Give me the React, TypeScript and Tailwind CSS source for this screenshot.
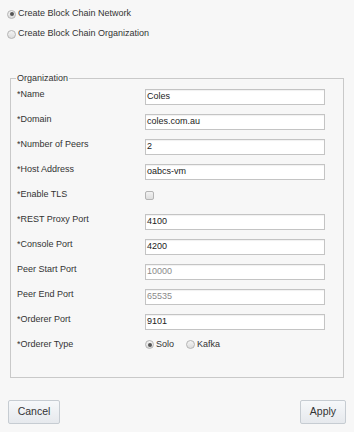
import React from "react";

type Row = {
  label: string;
  value?: string;
  disabled?: boolean;
  kind?: "text" | "check" | "radio";
};

const rows: Row[] = [
  { label: "*Name", value: "Coles" },
  { label: "*Domain", value: "coles.com.au" },
  { label: "*Number of Peers", value: "2" },
  { label: "*Host Address", value: "oabcs-vm" },
  { label: "*Enable TLS", kind: "check" },
  { label: "*REST Proxy Port", value: "4100" },
  { label: "*Console Port", value: "4200" },
  { label: "Peer Start Port", value: "10000", disabled: true },
  { label: "Peer End Port", value: "65535", disabled: true },
  { label: "*Orderer Port", value: "9101" },
  { label: "*Orderer Type", kind: "radio" },
];

function Radio({ checked }: { checked?: boolean }) {
  return (
    <span className="flex h-[9px] w-[9px] shrink-0 items-center justify-center rounded-full border border-[#b4b4b4] bg-gradient-to-b from-[#f4f4f4] to-[#dcdcdc]">
      {checked ? <span className="h-[4px] w-[4px] rounded-full bg-[#555]" /> : null}
    </span>
  );
}

function Field({ row }: { row: Row }) {
  if (row.kind === "check") {
    return (
      <span className="mt-[3px] block h-[9px] w-[9px] rounded-[2px] border border-[#b4b4b4] bg-gradient-to-b from-[#f2f2f2] to-[#dedede]" />
    );
  }
  if (row.kind === "radio") {
    return (
      <div className="flex h-[13px] items-center">
        <Radio checked />
        <span className="ml-[2px] leading-[13px]">Solo</span>
        <span className="ml-[12px]">
          <Radio />
        </span>
        <span className="ml-[2px] leading-[13px]">Kafka</span>
      </div>
    );
  }
  return (
    <div
      className={
        "mt-[1px] flex h-[16px] w-[180px] items-center border border-[#c4c4c4] bg-white pl-[1px] shadow-[inset_0_1px_1px_rgba(0,0,0,0.06)] " +
        (row.disabled ? "text-[#8a8a8a]" : "text-[#222]")
      }
    >
      {row.value}
    </div>
  );
}

export default function App() {
  return (
    <div className="flex h-[432px] w-[354px] flex-col bg-[#f7f7f7] font-['Liberation_Sans',Arial,sans-serif] text-[9px] text-[#333]">
      <div className="pl-[7px] pt-[4px]">
        <div className="flex h-[20px] items-center">
          <Radio checked />
          <span className="ml-[2px]">Create Block Chain Network</span>
        </div>
        <div className="flex h-[20px] items-center">
          <Radio />
          <span className="ml-[2px]">Create Block Chain Organization</span>
        </div>
      </div>

      <fieldset className="mx-[10px] mt-[28px] border border-[#c9c9c9] pb-[14px] pl-[6px] pt-[4px]">
        <legend className="-ml-[1px] px-[1px] leading-[12px]">Organization</legend>
        {rows.map((row) => (
          <div key={row.label} className="flex h-[25px] items-start">
            <span className="w-[128px] shrink-0 leading-[13px]">{row.label}</span>
            <Field row={row} />
          </div>
        ))}
      </fieldset>

      <div className="mt-[22px] flex justify-between px-[8px]">
        <button className="h-[24px] w-[52px] rounded-[2px] border border-[#c6ccd2] bg-gradient-to-b from-[#f6f8fa] to-[#e6e9ed] text-[10.5px] text-[#333]">
          Cancel
        </button>
        <button className="h-[24px] w-[46px] rounded-[2px] border border-[#c6ccd2] bg-gradient-to-b from-[#f6f8fa] to-[#e6e9ed] text-[10.5px] text-[#333]">
          Apply
        </button>
      </div>
    </div>
  );
}
